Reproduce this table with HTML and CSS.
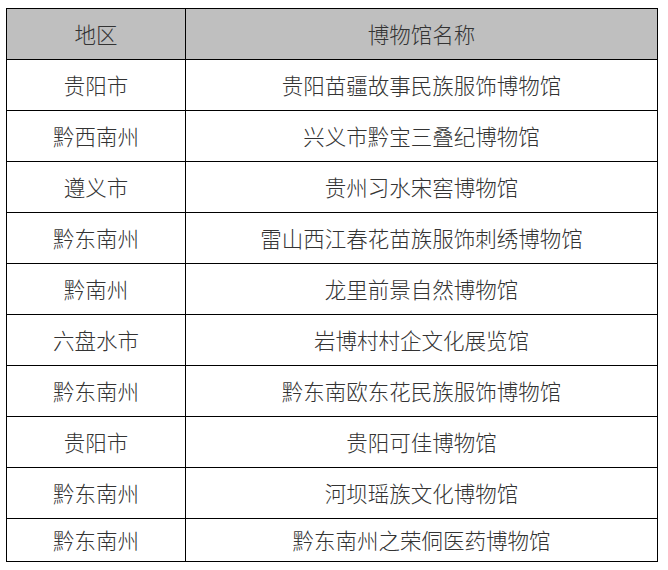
FILE: index.html
```html
<!DOCTYPE html>
<html lang="zh">
<head>
<meta charset="utf-8">
<link rel="stylesheet" href="styles.css">
</head>
<body>
<div class="page">
<table class="museums">
<colgroup><col class="c1"><col class="c2"></colgroup>
<thead>
<tr><th>地区</th><th>博物馆名称</th></tr>
</thead>
<tbody>
<tr><td>贵阳市</td><td>贵阳苗疆故事民族服饰博物馆</td></tr>
<tr><td>黔西南州</td><td>兴义市黔宝三叠纪博物馆</td></tr>
<tr><td>遵义市</td><td>贵州习水宋窖博物馆</td></tr>
<tr><td>黔东南州</td><td>雷山西江春花苗族服饰刺绣博物馆</td></tr>
<tr><td>黔南州</td><td>龙里前景自然博物馆</td></tr>
<tr><td>六盘水市</td><td>岩博村村企文化展览馆</td></tr>
<tr><td>黔东南州</td><td>黔东南欧东花民族服饰博物馆</td></tr>
<tr><td>贵阳市</td><td>贵阳可佳博物馆</td></tr>
<tr><td>黔东南州</td><td>河坝瑶族文化博物馆</td></tr>
<tr class="last"><td>黔东南州</td><td>黔东南州之荣侗医药博物馆</td></tr>
</tbody>
</table>
</div>
</body>
</html>
```
FILE: styles.css
```css
html, body {
  margin: 0;
  padding: 0;
  background: #ffffff;
}
.page {
  padding: 8px 0 0 6px;
}
.museums {
  border-collapse: collapse;
  width: 652px;
  table-layout: fixed;
  font-family: "Noto Sans CJK SC", "Noto Sans", sans-serif;
  font-size: 21.5px;
  font-weight: 300;
  color: #333333;
}
.c1 { width: 179px; }
.museums th,
.museums td {
  border: 1px solid #000;
  padding: 0;
  text-align: center;
  vertical-align: middle;
  font-weight: 300;
  height: 50px;
  line-height: 24px;
}
.museums th {
  background: #bfbfbf;
}
.museums tr.last td {
  height: 42px;
}
```
